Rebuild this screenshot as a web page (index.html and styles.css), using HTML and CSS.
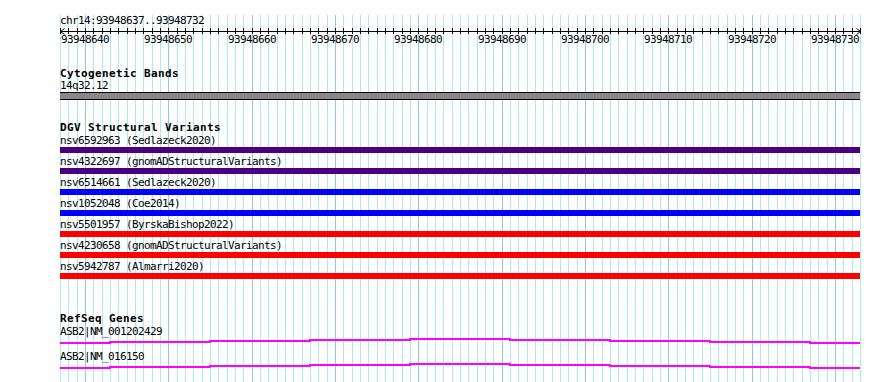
FILE: index.html
```html
<!DOCTYPE html>
<html lang="en">

<head>
    <meta charset="UTF-8">
    <title>chr14:93948637..93948732</title>
    <link rel="stylesheet" href="styles.css">
</head>

<body>
    <div class="browser">
        <div class="guides"></div>
        <div class="tracks">
            <div class="position">chr14:93948637..93948732</div>
            <svg class="ruler" width="802" height="18">
                <defs>
                    <pattern id="ticks" width="25" height="6" patternUnits="userSpaceOnUse">
                        <path d="M0.5 0V6M8.5 0V6M17.5 0V6" stroke="#000" />
                    </pattern>
                </defs>
                <rect x="0" y="1" width="801" height="6" fill="url(#ticks)" />
                <path d="M0 4.5H801" stroke="#000" />
                <polyline points="4.5,1.5 0.5,4.5 4.5,7.5" fill="none" stroke="#000" />
                <polyline points="796.5,1.5 800.5,4.5 796.5,7.5" fill="none" stroke="#000" />
                <g class="ruler-labels">
                    <text x="25" y="16">93948640</text>
                    <text x="108" y="16">93948650</text>
                    <text x="192" y="16">93948660</text>
                    <text x="275" y="16">93948670</text>
                    <text x="358" y="16">93948680</text>
                    <text x="442" y="16">93948690</text>
                    <text x="525" y="16">93948700</text>
                    <text x="608" y="16">93948710</text>
                    <text x="692" y="16">93948720</text>
                    <text x="775" y="16">93948730</text>
                </g>
            </svg>

            <div class="track cyto">
                <div class="track-title">Cytogenetic Bands</div>
                <div class="item-label">14q32.12</div>
                <div class="band"></div>
            </div>

            <div class="track dgv">
                <div class="track-title">DGV Structural Variants</div>
                <div class="sv">
                    <div class="item-label">nsv6592963 (Sedlazeck2020)</div>
                    <div class="bar purple"></div>
                </div>
                <div class="sv">
                    <div class="item-label">nsv4322697 (gnomADStructuralVariants)</div>
                    <div class="bar purple"></div>
                </div>
                <div class="sv">
                    <div class="item-label">nsv6514661 (Sedlazeck2020)</div>
                    <div class="bar blue"></div>
                </div>
                <div class="sv">
                    <div class="item-label">nsv1052048 (Coe2014)</div>
                    <div class="bar blue"></div>
                </div>
                <div class="sv">
                    <div class="item-label">nsv5501957 (ByrskaBishop2022)</div>
                    <div class="bar red"></div>
                </div>
                <div class="sv">
                    <div class="item-label">nsv4230658 (gnomADStructuralVariants)</div>
                    <div class="bar red"></div>
                </div>
                <div class="sv">
                    <div class="item-label">nsv5942787 (Almarri2020)</div>
                    <div class="bar red"></div>
                </div>
            </div>

            <div class="track refseq">
                <div class="track-title">RefSeq Genes</div>
                <div class="item-label">ASB2|NM_001202429</div>
                <svg class="gene" width="800" height="13">
                    <path d="M0 5H50V4H150V3H250V2H350V1H450V2H550V3H650V4H750V5H800" />
                </svg>
                <div class="item-label">ASB2|NM_016150</div>
                <svg class="gene" width="800" height="13">
                    <path d="M0 5H50V4H150V3H250V2H350V1H450V2H550V3H650V4H750V5H800" />
                </svg>
            </div>
        </div>
    </div>
</body>

</html>
```

FILE: styles.css
```css
* {
    margin: 0;
    padding: 0;
}

body {
    background: #fff;
    overflow: hidden;
}

.browser {
    position: relative;
    width: 890px;
    height: 382px;
    font-family: "DejaVu Sans Mono", "Liberation Mono", monospace;
    font-size: 11px;
    letter-spacing: -0.62px;
    color: #000;
}

/* base guidelines: one per base, darker every 10 bases */
.guides {
    position: absolute;
    left: 60px;
    top: 0;
    width: 801px;
    height: 382px;
    background:
        linear-gradient(#8ccbe9, #8ccbe9) 25px 0 / 1px 100% no-repeat,
        linear-gradient(#8ccbe9, #8ccbe9) 108px 0 / 1px 100% no-repeat,
        linear-gradient(#8ccbe9, #8ccbe9) 192px 0 / 1px 100% no-repeat,
        linear-gradient(#8ccbe9, #8ccbe9) 275px 0 / 1px 100% no-repeat,
        linear-gradient(#8ccbe9, #8ccbe9) 358px 0 / 1px 100% no-repeat,
        linear-gradient(#8ccbe9, #8ccbe9) 442px 0 / 1px 100% no-repeat,
        linear-gradient(#8ccbe9, #8ccbe9) 525px 0 / 1px 100% no-repeat,
        linear-gradient(#8ccbe9, #8ccbe9) 608px 0 / 1px 100% no-repeat,
        linear-gradient(#8ccbe9, #8ccbe9) 692px 0 / 1px 100% no-repeat,
        linear-gradient(#8ccbe9, #8ccbe9) 775px 0 / 1px 100% no-repeat,
        linear-gradient(to right,
            #aee9ef 0 1px, transparent 1px 8px,
            #aee9ef 8px 9px, transparent 9px 17px,
            #aee9ef 17px 18px, transparent 18px 25px) 0 0 / 25px 100% repeat-x;
}

.tracks {
    position: relative;
    padding-left: 60px;
    width: 800px;
}

.position {
    margin-top: 15px;
    height: 12px;
    line-height: 12px;
}

.ruler {
    display: block;
    overflow: visible;
}

.ruler-labels text {
    font-family: "DejaVu Sans Mono", "Liberation Mono", monospace;
    font-size: 11px;
    letter-spacing: -0.62px;
    text-anchor: middle;
    fill: #000;
}

.track-title {
    font-weight: bold;
    letter-spacing: 0.38px;
    height: 13px;
    line-height: 12px;
}

.item-label {
    height: 12px;
    line-height: 12px;
    white-space: nowrap;
}

.cyto {
    margin-top: 23px;
}

.cyto .track-title {
    height: 12px;
}

.band {
    height: 6px;
    background: #888;
    border-top: 1px solid #000;
    border-bottom: 1px solid #000;
}

.dgv {
    margin-top: 22px;
}

.sv {
    margin-bottom: 3px;
}

.bar {
    height: 6px;
}

.purple {
    background: #4b0082;
}

.blue {
    background: #0000ff;
}

.red {
    background: #ff0000;
}

.refseq {
    margin-top: 34px;
}

.gene {
    display: block;
}

.gene path {
    fill: none;
    stroke: #ff00ff;
    stroke-width: 2;
}
```
